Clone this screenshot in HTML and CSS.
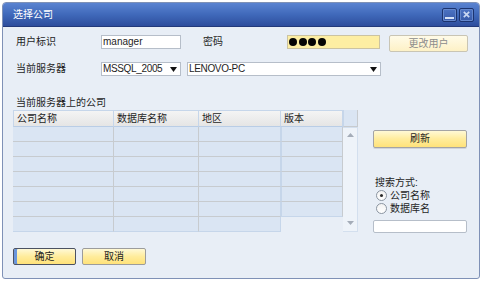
FILE: index.html
```html
<!DOCTYPE html>
<html>
<head>
<meta charset="utf-8">
<link rel="stylesheet" href="styles.css">
</head>
<body>
<div class="window">
  <div class="titlebar">
    <span class="title">选择公司</span>
    <div class="tbtns">
      <span class="tbtn min"><span class="bar"></span></span>
      <span class="tbtn close"><svg width="7" height="7" viewBox="0 0 7 7"><path d="M0.8 0.8 L6.2 6.2 M6.2 0.8 L0.8 6.2" stroke="#c9d7f2" stroke-width="1.7" fill="none"/></svg></span>
    </div>
  </div>
  <div class="content">
    <div class="row r1">
      <span class="lbl lbl1">用户标识</span>
      <span class="field user">manager</span>
      <span class="lbl lbl2">密码</span>
      <span class="field pwd"><i></i><i></i><i></i><i></i></span>
      <span class="btn disabled chg">更改用户</span>
    </div>
    <div class="row r2">
      <span class="lbl lbl1">当前服务器</span>
      <span class="field sel s1"><span class="seltext">MSSQL_2005</span><svg class="arr" width="7" height="5" viewBox="0 0 7 5"><path d="M0 0 H7 L3.5 5 Z" fill="#111"/></svg></span>
      <span class="field sel s2"><span class="seltext">LENOVO-PC</span><svg class="arr" width="7" height="5" viewBox="0 0 7 5"><path d="M0 0 H7 L3.5 5 Z" fill="#111"/></svg></span>
    </div>
    <div class="seclbl">当前服务器上的公司</div>
    <div class="main">
      <div class="grid">
        <div class="hc first">公司名称</div>
        <div class="hc">数据库名称</div>
        <div class="hc">地区</div>
        <div class="hc">版本</div>
        <div class="scroll">
          <svg width="7" height="4" viewBox="0 0 7 4"><path d="M0 4 H7 L3.5 0 Z" fill="#a4acb8"/></svg>
          <svg width="7" height="4" viewBox="0 0 7 4"><path d="M0 0 H7 L3.5 4 Z" fill="#a4acb8"/></svg>
        </div>
        <div class="c first"></div><div class="c"></div><div class="c"></div><div class="c c4"></div>
        <div class="c first"></div><div class="c"></div><div class="c"></div><div class="c c4"></div>
        <div class="c first"></div><div class="c"></div><div class="c"></div><div class="c c4"></div>
        <div class="c first"></div><div class="c"></div><div class="c"></div><div class="c c4"></div>
        <div class="c first"></div><div class="c"></div><div class="c"></div><div class="c c4"></div>
        <div class="c first"></div><div class="c"></div><div class="c"></div><div class="c c4"></div>
        <div class="c first last"></div><div class="c last"></div><div class="c last"></div><div class="c c4 last"></div>
      </div>
      <div class="side">
        <span class="btn refresh">刷新</span>
        <div class="search">搜索方式:</div>
        <div class="radio"><span class="dot on"></span>公司名称</div>
        <div class="radio"><span class="dot"></span>数据库名</div>
        <span class="field sinput"></span>
      </div>
    </div>
    <div class="bottom">
      <span class="btn ok">确定</span>
      <span class="btn cancel">取消</span>
    </div>
  </div>
</div>
</body>
</html>
```

FILE: styles.css
```css
* { box-sizing: border-box; }
html, body { margin: 0; padding: 0; background: #ffffff; }
body {
  font-family: "Liberation Sans", "Noto Sans CJK SC", sans-serif;
  font-size: 10px;
  color: #1e1e1e;
}
.window {
  margin: 2px 0 0 2px;
  width: 478px;
  height: 277px;
  border: 1px solid #7f91b6;
  border-radius: 4px 4px 3px 3px;
  background: #e8eef6;
  overflow: hidden;
  display: flex;
  flex-direction: column;
}
.titlebar {
  height: 24px;
  flex: none;
  background: linear-gradient(#5a83d1, #4069ba 50%, #2d4d9d);
  border-bottom: 1px solid #22397a;
  display: flex;
  align-items: center;
  justify-content: space-between;
  padding: 0 5px 0 10px;
}
.title { color: #ffffff; font-size: 10px; line-height: 14px; }
.tbtns { display: flex; gap: 2px; }
.tbtn {
  width: 15px;
  height: 14px;
  border: 1px solid #1c336e;
  border-radius: 2px;
  background: linear-gradient(#4d74c4, #3759a8);
  box-shadow: inset 0 0 0 1px #6487cc;
  display: flex;
  align-items: center;
  justify-content: center;
}
.tbtn.min { align-items: flex-end; padding-bottom: 2px; }
.tbtn .bar { width: 9px; height: 2px; background: #d6e2f7; }
.content { padding: 8px 11px 0 10px; }
.row { display: flex; align-items: flex-start; }
.lbl { line-height: 14px; }
.lbl1 { width: 88px; padding-left: 3px; }
.lbl2 { margin-left: 22px; width: 84px; }
.field {
  height: 14px;
  border: 1px solid #b6bec9;
  background: #ffffff;
  line-height: 12px;
  padding: 0 1px;
  display: flex;
  align-items: center;
}
.user { width: 80px; }
.pwd {
  width: 93px;
  background: #fdeea3;
  border-color: #cbc3a2;
  gap: 1.7px;
  padding-left: 1px;
}
.pwd i { width: 8px; height: 8px; border-radius: 50%; background: #050505; }
.btn {
  display: flex;
  align-items: center;
  justify-content: center;
  border: 1px solid #9c9c9c;
  border-radius: 2px;
  background: linear-gradient(#fff9d6, #ffec9c 50%, #ffe27a);
  line-height: 14px;
  color: #1e1e1e;
}
.chg {
  margin-left: 9px;
  width: 79px;
  height: 17px;
  background: linear-gradient(#fffbe8, #fdf1c6);
  border-color: #c9c5b4;
  color: #8c8c8c;
}
.r2 { margin-top: 10px; }
.sel { justify-content: space-between; padding-right: 3px; }
.seltext { letter-spacing: -0.35px; white-space: nowrap; }
.s1 { width: 80px; }
.s2 { margin-left: 6px; width: 194px; }
.arr { flex: none; }
.seclbl { margin-top: 20px; padding-left: 3px; line-height: 14px; }
.main { display: flex; align-items: flex-start; }
.grid {
  display: grid;
  grid-template-columns: 101px 85px 82px 62px 15px;
  grid-template-rows: 17px repeat(7, 15px);
}
.hc {
  background: linear-gradient(#f4f4f4, #e5e5e5);
  border-top: 1px solid #c6d6ea;
  border-right: 1px solid #c6d6ea;
  border-bottom: 1px solid #b9cde6;
  padding-left: 3px;
  line-height: 15px;
}
.hc.first, .c.first { border-left: 1px solid #c6d6ea; }
.c {
  background: #dae5f3;
  border-right: 1px solid #c7cbcf;
  border-bottom: 1px solid #c7cbcf;
}
.c.c4 { border-right-color: #c6d6ea; }
.c.last { border-bottom-color: #c6d6ea; }
.scroll {
  grid-column: 5;
  grid-row: 2 / span 7;
  background: #eef3f9;
  border: 1px solid #d3dfee;
  border-left: none;
  display: flex;
  flex-direction: column;
  align-items: center;
  justify-content: space-between;
  padding: 5px 0 6px;
}
.side { margin-left: 15px; width: 94px; display: flex; flex-direction: column; }
.refresh { margin-top: 20px; height: 18px; border-color: #a4a4a4; box-shadow: 0 1px 0 #d0d4da; }
.search { margin-top: 28px; padding-left: 2px; line-height: 13px; }
.radio { display: flex; align-items: center; line-height: 13px; }
.dot {
  width: 11px;
  height: 11px;
  margin-left: 3px;
  margin-right: 3px;
  border-radius: 50%;
  border: 1px solid #8b95a1;
  background: linear-gradient(#f2f2f2, #ffffff);
  display: flex;
  align-items: center;
  justify-content: center;
}
.dot.on::after { content: ""; width: 3px; height: 3px; border-radius: 50%; background: #2a2a2a; }
.sinput { margin-top: 5px; width: 94px; height: 13px; border-radius: 2px; }
.bottom { margin-top: 15px; display: flex; }
.ok {
  width: 63px;
  height: 17px;
  border-color: #4c5262;
  box-shadow: inset 3px 0 0 #6a96dc;
}
.cancel { margin-left: 6px; width: 64px; height: 17px; }
```
